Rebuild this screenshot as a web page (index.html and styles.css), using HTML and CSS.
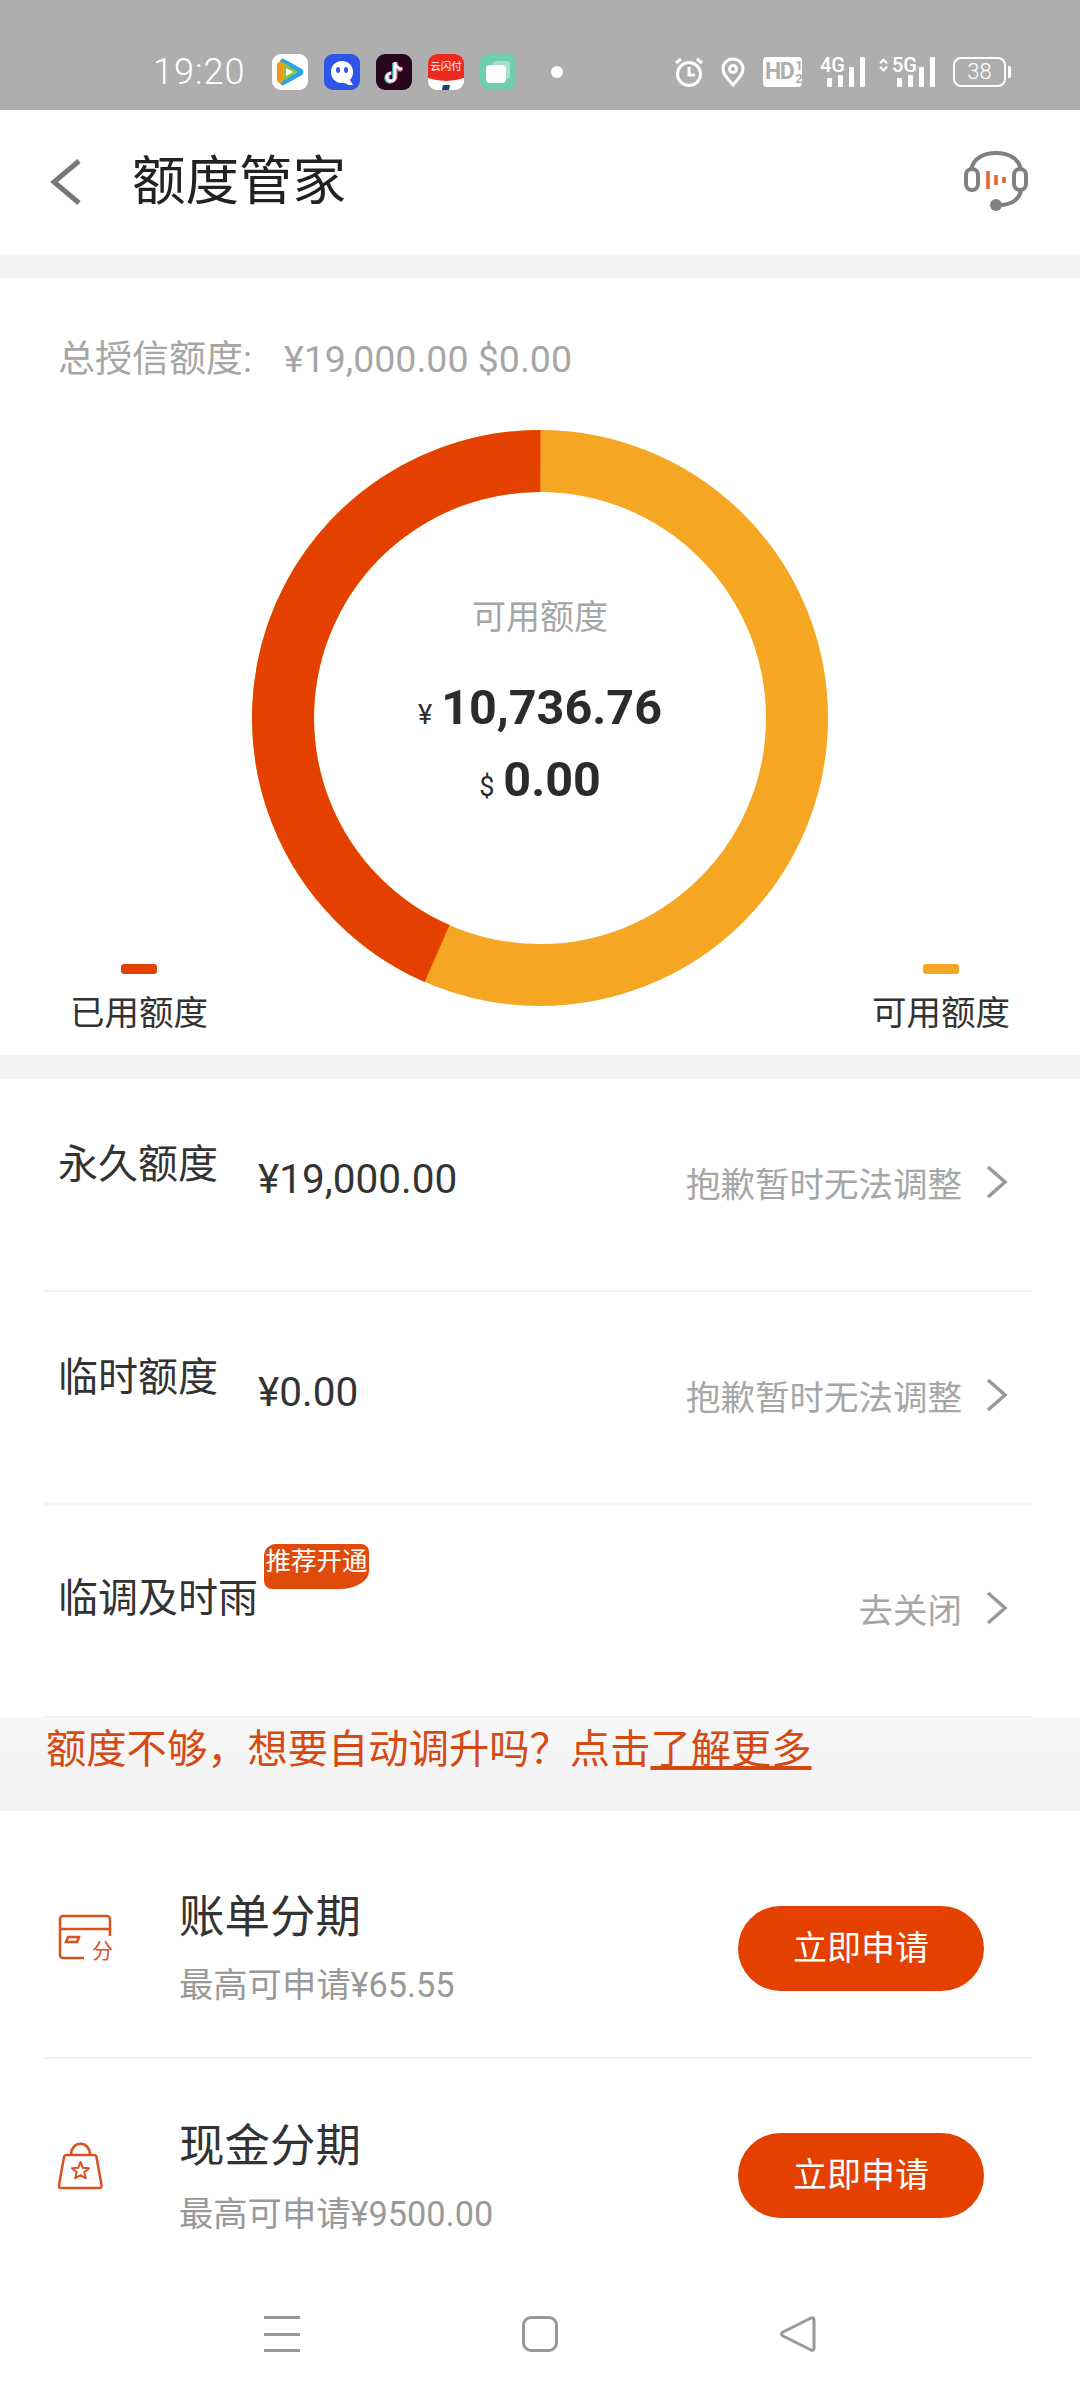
FILE: index.html
```html
<!DOCTYPE html>
<html lang="zh-CN">
<head>
  <meta charset="UTF-8">
  <title>额度管家</title>
  <link rel="stylesheet" href="styles.css">
</head>
<body>

<div class="status-bar">
  <span class="clock">19:20</span>
  <div class="app-icons">
    <svg class="app-icon" viewBox="0 0 36 36"><rect width="36" height="36" rx="9" fill="#fff"/><path d="M8 7q1-3 4-2l18 10q3 3 0 6L12 31q-3 1-4-2z" fill="#2aa4e8"/><path d="M5 12q0-5 5-4l8 4-8 17q-5 1-5-4z" fill="#f09a1a"/><path d="M11 9l15 9-15 9z" fill="#8cc63f"/><path d="M14 14l7 4-7 4z" fill="#fff"/></svg>
    <svg class="app-icon" viewBox="0 0 36 36"><rect width="36" height="36" rx="9" fill="#2f55e8"/><path d="M18 7c-7 0-11 5-11 11s4 11 11 11c2 0 4 0 6 2h5l-3-5c2-2 3-5 3-8 0-6-4-11-11-11z" fill="#fff"/><ellipse cx="14" cy="16" rx="2" ry="3" fill="#2f55e8"/><ellipse cx="22" cy="16" rx="2" ry="3" fill="#2f55e8"/></svg>
    <svg class="app-icon" viewBox="0 0 36 36"><rect width="36" height="36" rx="9" fill="#25061c"/><path d="M18 9v15a4 4 0 1 1-4-4M18 9c0 4 3 7 7 7" fill="none" stroke="#45d0d8" stroke-width="3.500"/><path d="M20 8v15a4 4 0 1 1-4-4M20 8c0 4 3 7 7 7" fill="none" stroke="#f0305a" stroke-width="3.500"/><path d="M19 8v15a4 4 0 1 1-4-4M19 8c0 4 3 7 7 7" fill="none" stroke="#f5f5f5" stroke-width="3"/></svg>
    <svg class="app-icon" viewBox="0 0 36 36"><rect width="36" height="36" rx="9" fill="#fff"/><path d="M0 9a9 9 0 0 1 9-9h18a9 9 0 0 1 9 9v15q-18 6-36 0z" fill="#ee2a20"/><text class="app-icon-text" x="18" y="16">云闪付</text><path d="M15 31h7l-1 5h-7z" fill="#1d3f72"/></svg>
    <svg class="app-icon" viewBox="0 0 36 36"><rect width="36" height="36" rx="9" fill="#6fcdb0"/><rect x="12" y="7" width="18" height="18" rx="4" fill="#a5e0cc"/><rect x="6" y="11" width="20" height="18" rx="4" fill="#fff"/></svg>
  </div>
  <span class="dot"></span>
  <div class="sys-icons">
    <svg class="alarm" viewBox="0 0 28 30" fill="none" stroke="#fff" stroke-width="3"><circle cx="14" cy="17" r="11.500"/><path d="M14 10v8h6M1 6l5-4M27 6l-5-4"/></svg>
    <svg class="pin" viewBox="0 0 24 30" fill="none" stroke="#fff" stroke-width="3"><path d="M12 28C6 21 2 17 2 12a10 10 0 0 1 20 0c0 5-4 9-10 16z"/><circle cx="12" cy="12" r="3.500"/></svg>
    <span class="hd">HD<span class="hd-frac">1<br>2</span></span>
    <div class="signal signal-4g">
      <span class="net">4G</span>
      <div class="bars"><i class="b1"></i><i class="b2"></i><i class="b3"></i><i class="b4"></i></div>
    </div>
    <div class="signal signal-5g">
      <span class="net"><svg class="updown" viewBox="0 0 10 16" fill="none" stroke="#fff" stroke-width="2.500"><path d="M1 6l4-4 4 4M1 10l4 4 4-4"/></svg>5G</span>
      <div class="bars"><i class="b1"></i><i class="b2"></i><i class="b3"></i><i class="b4"></i></div>
    </div>
    <div class="battery"><span class="battery-body">38</span><span class="battery-tip"></span></div>
  </div>
</div>

<div class="header">
  <svg class="back" viewBox="0 0 32 46" fill="none" stroke="#777" stroke-width="5"><path d="M29 2L4 23l25 21"/></svg>
  <span class="header-title">额度管家</span>
  <svg class="headset" viewBox="0 0 64 62" fill="none">
    <path d="M7 19C9 7 20 2 32 2s23 5 25 17" stroke="#808080" stroke-width="4"/>
    <rect x="2" y="18" width="12" height="21" rx="6" stroke="#808080" stroke-width="4"/>
    <rect x="50" y="18" width="12" height="21" rx="6" stroke="#808080" stroke-width="4"/>
    <path d="M57 39c-1 9-10 15-21 15" stroke="#808080" stroke-width="4"/>
    <circle cx="32" cy="54" r="6" fill="#808080"/>
    <path d="M24 20v18M32 24v10M40 26v6" stroke="#e8622a" stroke-width="3.500"/>
  </svg>
</div>

<div class="band"></div>

<div class="summary">
  <div class="total">总授信额度:<span class="total-values">¥19,000.00 $0.00</span></div>
  <div class="donut">
    <svg class="donut-ring" viewBox="0 0 576 576">
      <circle cx="288" cy="288" r="257" fill="none" stroke="#f5a623" stroke-width="62"/>
      <circle cx="288" cy="288" r="257" fill="none" stroke="#e44100" stroke-width="62" stroke-dasharray="701.6 1614.8" transform="rotate(113.6 288 288)"/>
    </svg>
    <div class="donut-text">
      <div class="donut-label">可用额度</div>
      <div class="donut-amount donut-cny"><span class="unit">¥</span>10,736.76</div>
      <div class="donut-amount donut-usd"><span class="unit">$</span>0.00</div>
    </div>
  </div>
  <div class="legend">
    <div class="legend-item"><span class="legend-bar used"></span>已用额度</div>
    <div class="legend-item"><span class="legend-bar free"></span>可用额度</div>
  </div>
</div>

<div class="band"></div>

<div class="limits">
  <div class="limit-row">
    <span class="limit-name">永久额度</span>
    <span class="limit-value">¥19,000.00</span>
    <span class="limit-hint">抱歉暂时无法调整</span>
    <svg class="chevron" viewBox="0 0 22 34" fill="none" stroke="#999" stroke-width="3.500"><path d="M2 2l17 15L2 32"/></svg>
  </div>
  <div class="limit-row">
    <span class="limit-name">临时额度</span>
    <span class="limit-value">¥0.00</span>
    <span class="limit-hint">抱歉暂时无法调整</span>
    <svg class="chevron" viewBox="0 0 22 34" fill="none" stroke="#999" stroke-width="3.500"><path d="M2 2l17 15L2 32"/></svg>
  </div>
  <div class="limit-row">
    <span class="limit-name limit-name-badged">临调及时雨<span class="badge">推荐开通</span></span>
    <span class="limit-hint">去关闭</span>
    <svg class="chevron" viewBox="0 0 22 34" fill="none" stroke="#999" stroke-width="3.500"><path d="M2 2l17 15L2 32"/></svg>
  </div>
</div>

<div class="notice">额度不够，想要自动调升吗？点击<u>了解更多</u></div>

<div class="plans">
  <div class="plan-row plan-bill">
    <svg class="plan-icon" viewBox="0 0 56 46" fill="none" stroke="#d9521c" stroke-width="2.500">
      <path d="M26 44H5a3 3 0 0 1-3-3V5a3 3 0 0 1 3-3h44a3 3 0 0 1 3 3v17M2 15h50"/>
      <path d="M10 23h11l-2 5H8z"/>
      <text class="plan-icon-text" x="34" y="44">分</text>
    </svg>
    <div class="plan-text">
      <div class="plan-title">账单分期</div>
      <div class="plan-sub">最高可申请¥65.55</div>
    </div>
    <span class="apply-btn">立即申请</span>
  </div>
  <div class="plan-row plan-cash">
    <svg class="plan-icon" viewBox="0 0 56 46" fill="none" stroke="#d9521c" stroke-width="2.500" stroke-linejoin="round">
      <path d="M13 12C13-3 32-3 32 12"/>
      <path d="M9 12h27q2 0 2.500 2l5 28q.5 3-2 3H3q-2.500 0-2-3l5-28q.5-2 3-2z"/>
      <path d="M22.500 19l2.350 5.760 6.150.44-4.700 4.040 1.500 6.060-5.300-3.300-5.300 3.300 1.500-6.060-4.700-4.040 6.150-.44z" stroke-width="2"/>
    </svg>
    <div class="plan-text">
      <div class="plan-title">现金分期</div>
      <div class="plan-sub">最高可申请¥9500.00</div>
    </div>
    <span class="apply-btn">立即申请</span>
  </div>
</div>

<div class="nav-bar">
  <div class="nav-menu"><i></i><i></i><i></i></div>
  <span class="nav-home"></span>
  <svg class="nav-back" viewBox="0 0 36 36" fill="none" stroke="#999" stroke-width="3"><path d="M3 16l28-14q3-1 3 2v28q0 3-3 2L3 20q-3-2 0-4z" stroke-linejoin="round"/></svg>
</div>

</body>
</html>
```

FILE: styles.css
```css
* {
  box-sizing: border-box;
}

body {
  margin: 0;
  width: 1080px;
  height: 2400px;
  overflow: hidden;
  background: #fff;
  color: #333;
  font-family: Roboto, "Noto Sans CJK SC", sans-serif;
  display: flex;
  flex-direction: column;
}

/* 状态栏 */
.status-bar {
  height: 110px;
  background: #aeaeae;
  display: flex;
  align-items: center;
  padding: 34px 0 0 153px;
  color: #fff;
}

.clock {
  width: 119px;
  font-size: 36px;
  font-weight: 300;
  letter-spacing: 1px;
}

.app-icons {
  display: flex;
  gap: 16px;
}

.app-icon {
  width: 36px;
  height: 36px;
  display: block;
}

.app-icon-text {
  font-family: "Noto Sans CJK SC", sans-serif;
  font-size: 10.500px;
  fill: #fff;
  text-anchor: middle;
}

.dot {
  width: 12px;
  height: 12px;
  margin-left: 35px;
  border-radius: 50%;
  background: #fff;
}

.sys-icons {
  margin-left: 112px;
  display: flex;
  align-items: center;
  gap: 18px;
}

.alarm {
  width: 28px;
  height: 30px;
}

.pin {
  width: 24px;
  height: 30px;
}

.hd {
  width: 39px;
  height: 30px;
  background: #fff;
  border-radius: 4px;
  color: #aeaeae;
  font-size: 23px;
  font-weight: 700;
  line-height: 30px;
  padding-left: 2px;
  display: flex;
  letter-spacing: -1.500px;
}

.hd-frac {
  font-size: 13px;
  line-height: 13px;
  padding-top: 2px;
  margin-left: 2px;
  letter-spacing: 0;
}

.signal {
  position: relative;
  height: 30px;
  display: flex;
  align-items: flex-end;
  justify-content: flex-end;
}

.signal-4g {
  width: 45px;
}

.signal-5g {
  width: 56px;
  margin-left: -4px;
}

.net {
  position: absolute;
  left: 0;
  top: -2px;
  font-size: 20px;
  font-weight: 500;
  line-height: 20px;
  display: flex;
  align-items: center;
}

.updown {
  width: 9px;
  height: 14px;
  margin-right: 4px;
}

.bars {
  display: flex;
  align-items: flex-end;
  gap: 6px;
}

.bars i {
  display: block;
  width: 5px;
  background: #fff;
  border-radius: 1px;
}

.bars .b1 { height: 9px; }
.bars .b2 { height: 12px; }
.bars .b3 { height: 20px; }
.bars .b4 { height: 30px; }

.battery {
  display: flex;
  align-items: center;
}

.battery-body {
  width: 53px;
  height: 30px;
  border: 2.500px solid #fff;
  border-radius: 8px;
  font-size: 22px;
  font-weight: 300;
  line-height: 25px;
  text-align: center;
}

.battery-tip {
  width: 3px;
  height: 12px;
  margin-left: 2px;
  background: #fff;
  border-radius: 0 2px 2px 0;
}

/* 标题栏 */
.header {
  height: 144px;
  display: flex;
  align-items: center;
  padding-left: 50px;
}

.back {
  width: 32px;
  height: 46px;
}

.header-title {
  margin-left: 50px;
  margin-top: -12px;
  font-size: 53.500px;
  color: #222;
  font-weight: 400;
}

.headset {
  width: 64px;
  height: 62px;
  margin-left: auto;
  margin-right: 52px;
}

.band {
  height: 24px;
  background: #f4f4f4;
}

/* 额度总览 */
.summary {
  height: 777px;
  padding-top: 58px;
}

.total {
  padding-left: 58px;
  height: 46px;
  font-size: 37px;
  line-height: 46px;
  color: #a6a6a6;
}

.total-values {
  margin-left: 32px;
  font-size: 37.500px;
}

.donut {
  position: relative;
  width: 576px;
  height: 576px;
  margin: 48px auto 0;
}

.donut-ring {
  display: block;
  width: 576px;
  height: 576px;
}

.donut-text {
  position: absolute;
  left: 0;
  right: 0;
  top: 162px;
  text-align: center;
}

.donut-label {
  font-size: 34px;
  line-height: 50px;
  color: #a6a6a6;
}

.donut-amount {
  font-size: 48.500px;
  font-weight: 700;
  line-height: 66px;
  color: #2b2b2b;
}

.donut-cny {
  margin-top: 33px;
}

.donut-usd {
  margin-top: -1px;
}

.unit {
  margin-right: 9px;
  font-size: 27px;
  font-weight: 400;
}

.legend {
  display: flex;
  justify-content: space-between;
  padding: 0 70px;
  margin-top: -42px;
}

.legend-item {
  display: flex;
  flex-direction: column;
  align-items: center;
  gap: 18px;
  font-size: 34.500px;
  line-height: 42px;
  color: #333;
}

.legend-bar {
  width: 36px;
  height: 10px;
  border-radius: 3px;
}

.legend-bar.used {
  background: #e44100;
}

.legend-bar.free {
  background: #f5a623;
}

/* 额度列表 */
.limits {
  padding: 0 48px 0 45px;
}

.limit-row {
  height: 213px;
  border-bottom: 2px solid #f0f0f0;
  display: flex;
  align-items: center;
  padding: 0 0 0 13px;
}

.limit-name {
  width: 200px;
  font-size: 40px;
  line-height: 50px;
  color: #333;
  margin-top: -40px;
}

.limit-name-badged {
  position: relative;
  margin-top: -23px;
  white-space: nowrap;
}

.limit-value {
  font-size: 40.500px;
  color: #333;
  margin-top: -12px;
}

.limit-hint {
  margin-left: auto;
  margin-top: -6px;
  font-size: 34.500px;
  color: #a6a6a6;
}

.chevron {
  width: 22px;
  height: 34px;
  margin: -6px 24px 0 24px;
}

.badge {
  position: absolute;
  left: 206px;
  top: -30px;
  width: 105px;
  height: 45px;
  background: #e04a0a;
  color: #fff;
  font-size: 25.500px;
  line-height: 35px;
  text-align: center;
  border-radius: 12px 8px 30px 8px / 12px 8px 18px 8px;
}

/* 提示条 */
.notice {
  height: 94px;
  margin-top: -1px;
  padding: 4px 0 0 46px;
  background: linear-gradient(#f7f7f7, #f2f2f2);
  color: #d44a12;
  font-size: 40.300px;
  line-height: 58px;
}

/* 分期 */
.plans {
  padding: 0 48px 0 45px;
}

.plan-row {
  display: flex;
  align-items: center;
  padding-left: 13px;
}

.plan-bill {
  height: 248px;
  padding-top: 29px;
  border-bottom: 2px solid #f0f0f0;
}

.plan-cash {
  height: 185px;
  padding-top: 52px;
}

.plan-cash .apply-btn {
  margin-top: -4px;
}

.plan-icon {
  width: 56px;
  height: 46px;
  margin-top: -24px;
  flex: none;
  overflow: visible;
}

.plan-icon-text {
  font-family: "Noto Sans CJK SC", sans-serif;
  font-size: 21px;
  fill: #d9521c;
  stroke: none;
}

.plan-text {
  margin-left: 65px;
}

.plan-title {
  font-size: 45.500px;
  line-height: 58px;
  color: #333;
}

.plan-sub {
  margin-top: 15px;
  font-size: 34.300px;
  line-height: 46px;
  color: #999;
}

.apply-btn {
  margin-left: auto;
  margin-right: 48px;
  width: 246px;
  height: 85px;
  border-radius: 43px;
  background: #e44100;
  color: #fff;
  font-size: 34px;
  line-height: 85px;
  text-align: center;
}

/* 底部导航 */
.nav-bar {
  margin-top: auto;
  height: 155px;
  background: #fff;
  display: flex;
  align-items: center;
  padding: 23px 0 0 264px;
}

.nav-menu {
  width: 36px;
  height: 36px;
  display: flex;
  flex-direction: column;
  justify-content: space-between;
}

.nav-menu i {
  display: block;
  height: 3px;
  background: #999;
}

.nav-home {
  width: 36px;
  height: 36px;
  margin-left: 222px;
  border: 3px solid #999;
  border-radius: 9px;
}

.nav-back {
  width: 36px;
  height: 36px;
  margin-left: 222px;
}
```
